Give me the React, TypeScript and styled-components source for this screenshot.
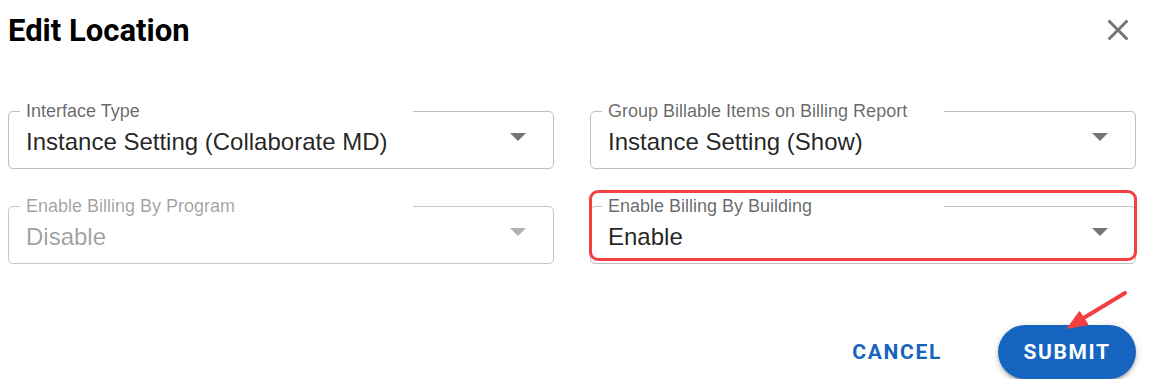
import React from 'react';
import styled, { createGlobalStyle } from 'styled-components';

const GlobalStyle = createGlobalStyle`
  html, body {
    margin: 0;
    padding: 0;
    background: #ffffff;
  }
  body {
    font-family: Roboto, "Liberation Sans", Arial, sans-serif;
  }
`;

const Dialog = styled.div`
  width: 1128px;
  padding: 0 14px 0 8px;
`;

const Header = styled.div`
  display: flex;
  align-items: center;
  justify-content: space-between;
  height: 36px;
  margin-top: 12px;
`;

const Title = styled.h2`
  margin: 0;
  padding-top: 2px;
  font-family: Roboto, sans-serif;
  font-weight: 700;
  font-size: 31px;
  line-height: 36px;
  color: #000;
`;

const CloseButton = styled.button`
  display: flex;
  width: 36px;
  height: 36px;
  padding: 0;
  border: 0;
  background: transparent;
  color: #757575;
  cursor: pointer;
`;

const Grid = styled.div`
  display: grid;
  grid-template-columns: 1fr 1fr;
  column-gap: 36px;
  row-gap: 28px;
  margin-top: 54px;
`;

const FieldWrap = styled.div`
  position: relative;
`;

const Fieldset = styled.fieldset<{ $disabled?: boolean }>`
  margin: 0;
  padding: 0;
  min-width: 0;
  border: 1px solid ${p => (p.$disabled ? 'rgba(0,0,0,0.22)' : 'rgba(0,0,0,0.25)')};
  border-radius: 5px;
`;

const Legend = styled.legend<{ $notch: number; $disabled?: boolean }>`
  width: ${p => p.$notch}px;
  box-sizing: border-box;
  margin-left: 11px;
  padding: 0 6px;
  font-family: "Liberation Sans", Arial, sans-serif;
  font-size: 18px;
  line-height: 18px;
  color: ${p => (p.$disabled ? 'rgba(0,0,0,0.38)' : 'rgba(0,0,0,0.6)')};
  white-space: nowrap;
`;

const Row = styled.div`
  display: flex;
  align-items: flex-start;
  justify-content: space-between;
  padding: 8px 27px 12px 17px;
`;

const Value = styled.span<{ $disabled?: boolean }>`
  font-family: "Liberation Sans", Arial, sans-serif;
  font-size: 24px;
  line-height: 28px;
  color: ${p => (p.$disabled ? 'rgba(0,0,0,0.38)' : 'rgba(0,0,0,0.87)')};
`;

const Caret = styled.svg<{ $disabled?: boolean }>`
  margin-top: 5px;
  fill: ${p => (p.$disabled ? 'rgba(0,0,0,0.3)' : 'rgba(0,0,0,0.54)')};
`;

const Highlight = styled.div`
  position: absolute;
  left: -1px;
  right: -1px;
  top: -7px;
  bottom: 3px;
  border: 3px solid #f43f43;
  border-radius: 9px;
  pointer-events: none;
`;

const Actions = styled.div`
  display: flex;
  align-items: center;
  justify-content: flex-end;
  gap: 56px;
  margin-top: 61px;
`;

const CancelButton = styled.button`
  padding: 0;
  border: 0;
  background: transparent;
  font-family: Roboto, sans-serif;
  font-weight: 700;
  font-size: 21px;
  letter-spacing: 1.7px;
  color: #1565c0;
  cursor: pointer;
`;

const SubmitWrap = styled.div`
  position: relative;
`;

const SubmitButton = styled.button`
  width: 138px;
  height: 54px;
  padding: 0;
  border: 0;
  border-radius: 27px;
  background: #1565c0;
  box-shadow: 0 3px 3px -2px rgba(0,0,0,0.25), 0 3px 4px 0 rgba(0,0,0,0.16), 0 1px 8px 0 rgba(0,0,0,0.12);
  font-family: Roboto, sans-serif;
  font-weight: 700;
  font-size: 21px;
  letter-spacing: 1.6px;
  color: #fff;
  cursor: pointer;
`;

const Pointer = styled.svg`
  position: absolute;
  left: 62px;
  top: -39px;
  overflow: visible;
`;

type FieldProps = {
  label: string;
  value: string;
  notch: number;
  disabled?: boolean;
  highlighted?: boolean;
};

const SelectField = ({ label, value, notch, disabled, highlighted }: FieldProps) => (
  <FieldWrap>
    <Fieldset $disabled={disabled}>
      <Legend $notch={notch} $disabled={disabled}>{label}</Legend>
      <Row>
        <Value $disabled={disabled}>{value}</Value>
        <Caret $disabled={disabled} width="16" height="8" viewBox="0 0 16 8">
          <path d="M0 0h16l-8 8z" />
        </Caret>
      </Row>
    </Fieldset>
    {highlighted && <Highlight />}
  </FieldWrap>
);

const App = () => (
  <>
    <GlobalStyle />
    <Dialog>
      <Header>
        <Title>Edit Location</Title>
        <CloseButton aria-label="close">
          <svg width="36" height="36" viewBox="0 0 24 24" fill="currentColor">
            <path d="M19 6.41 17.59 5 12 10.59 6.41 5 5 6.41 10.59 12 5 17.59 6.41 19 12 13.41 17.59 19 19 17.59 13.41 12z" />
          </svg>
        </CloseButton>
      </Header>

      <Grid>
        <SelectField label="Interface Type" value="Instance Setting (Collaborate MD)" notch={393} />
        <SelectField label="Group Billable Items on Billing Report" value="Instance Setting (Show)" notch={342} />
        <SelectField label="Enable Billing By Program" value="Disable" notch={393} disabled />
        <SelectField label="Enable Billing By Building" value="Enable" notch={342} highlighted />
      </Grid>

      <Actions>
        <CancelButton>CANCEL</CancelButton>
        <SubmitWrap>
          <SubmitButton>SUBMIT</SubmitButton>
          <Pointer width="72" height="48" viewBox="0 0 72 48">
            <line x1="65" y1="7" x2="22" y2="33" stroke="#f43f43" strokeWidth="4" strokeLinecap="round" />
            <path d="M8 42 L19.5 26 L27.5 38.5 Z" fill="#f43f43" stroke="#f43f43" strokeWidth="1.5" strokeLinejoin="round" />
          </Pointer>
        </SubmitWrap>
      </Actions>
    </Dialog>
  </>
);

export default App;
